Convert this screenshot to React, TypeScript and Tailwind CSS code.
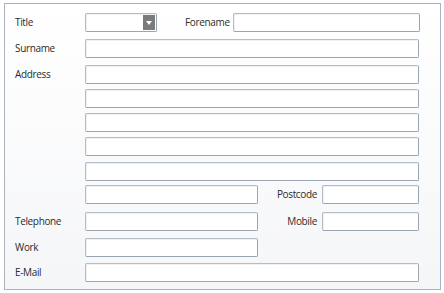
import React from 'react'

const inputCls =
  'h-[19px] bg-white border border-[#b4bcc6] border-r-[#98a4b2] border-b-[#98a4b2] rounded-[2px] shadow-[inset_1px_1px_0_#eef1f4]'

function Field({ className = '' }: { className?: string }) {
  return <div className={`${inputCls} ${className}`} />
}

function Label({ children, className = '' }: { children: React.ReactNode; className?: string }) {
  return (
    <div className={`text-[10px] tracking-[-0.35px] leading-[19px] text-[#2b2b2b] ${className}`}>
      {children}
    </div>
  )
}

export default function App() {
  return (
    <div className="w-[444px] h-[293px] bg-white pt-[3px] pl-[4px] font-['Open_Sans',sans-serif]">
      <div className="w-[437px] h-[287px] border border-[#aab4c0] bg-gradient-to-b from-white to-[#f5f6f8] pt-[9px] pl-[10px]">
        {/* Title / Forename */}
        <div className="flex items-center">
          <Label className="w-[70px]">Title</Label>
          <div className={`${inputCls} w-[72px] flex justify-end p-px`}>
            <div className="w-[12px] h-full bg-[#7b7b7b] flex items-center justify-center">
              <svg width="6" height="4" viewBox="0 0 6 4">
                <path d="M0 0h6L3 4z" fill="#fff" />
              </svg>
            </div>
          </div>
          <Label className="ml-[28px] w-[48px]">Forename</Label>
          <Field className="w-[187px]" />
        </div>

        {/* Surname */}
        <div className="flex items-center mt-[7px]">
          <Label className="w-[70px]">Surname</Label>
          <Field className="w-[334px]" />
        </div>

        {/* Address */}
        <div className="flex items-center mt-[7px]">
          <Label className="w-[70px]">Address</Label>
          <Field className="w-[334px]" />
        </div>
        <div className="pl-[70px] flex flex-col">
          <Field className="w-[334px] mt-[5px]" />
          <Field className="w-[334px] mt-[5px]" />
          <Field className="w-[334px] mt-[5px]" />
          <Field className="w-[334px] mt-[6px]" />
          <div className="flex items-center mt-[4px]">
            <Field className="w-[173px]" />
            <Label className="w-[64px] text-right pr-[5px]">Postcode</Label>
            <Field className="w-[97px]" />
          </div>
        </div>

        {/* Telephone / Mobile */}
        <div className="flex items-center mt-[8px]">
          <Label className="w-[70px]">Telephone</Label>
          <Field className="w-[173px]" />
          <Label className="w-[64px] text-right pr-[5px]">Mobile</Label>
          <Field className="w-[97px]" />
        </div>

        {/* Work */}
        <div className="flex items-center mt-[7px]">
          <Label className="w-[70px]">Work</Label>
          <Field className="w-[173px]" />
        </div>

        {/* E-Mail */}
        <div className="flex items-center mt-[6px]">
          <Label className="w-[70px]">E-Mail</Label>
          <Field className="w-[334px]" />
        </div>
      </div>
    </div>
  )
}
